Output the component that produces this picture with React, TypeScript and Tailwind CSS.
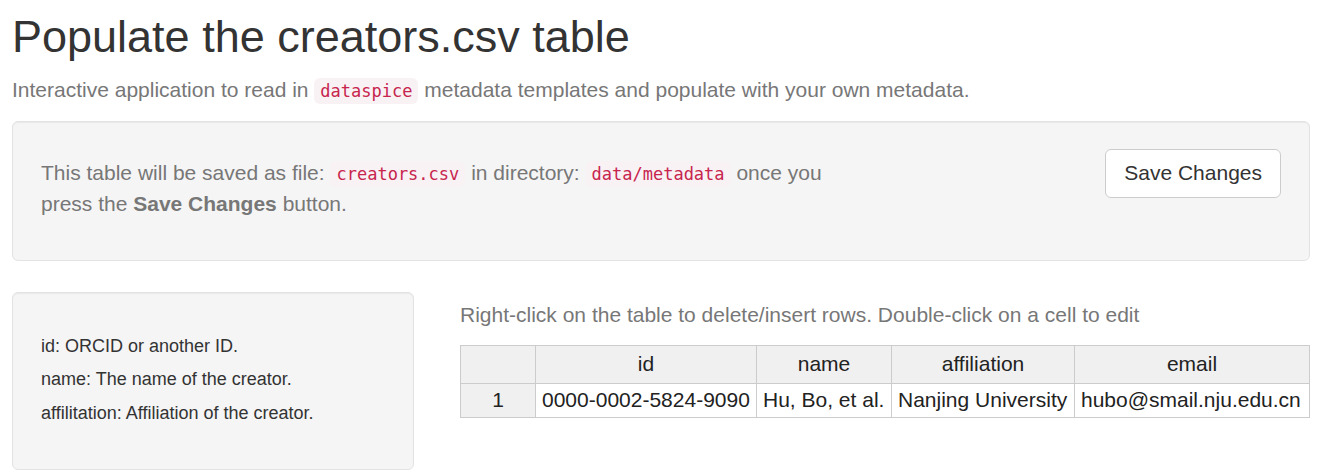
import React from 'react';

const Code: React.FC<{ children: React.ReactNode }> = ({ children }) => (
  <code className="rounded-[6px] bg-[#f9f2f4] px-[6px] py-[3px] font-['DejaVu_Sans_Mono',monospace] text-[17px] text-[#c7254e]">
    {children}
  </code>
);

const columns = [
  { key: 'id', label: 'id', width: 'w-[221px]' },
  { key: 'name', label: 'name', width: 'w-[135px]' },
  { key: 'affiliation', label: 'affiliation', width: 'w-[183px]' },
  { key: 'email', label: 'email', width: 'w-[235px]' },
];

const rows = [
  {
    id: '0000-0002-5824-9090',
    name: 'Hu, Bo, et al.',
    affiliation: 'Nanjing University',
    email: 'hubo@smail.nju.edu.cn',
  },
];

const App: React.FC = () => {
  return (
    <div className="min-h-[474px] bg-white pl-[12px] pr-[8px] pt-[12px] font-['Liberation_Sans',Arial,sans-serif] text-[21px] leading-[30px] text-[#333]">
      <h2 className="text-[45px] font-normal leading-[1.1] text-[#333]">Populate the creators.csv table</h2>
      <p className="mt-[13px] text-[#777]">
        Interactive application to read in <Code>dataspice</Code> metadata templates and populate with your own metadata.
      </p>

      <div className="mt-[15px] rounded-[6px] border border-[#e3e3e3] bg-[#f5f5f5] px-[28px] pt-[27px] pb-[41px] shadow-[inset_0_1px_1px_rgba(0,0,0,0.05)]">
        <div className="flex items-start justify-between">
          <p className="mt-[9px] w-[812px] text-[#777]">
            This table will be saved as file: <Code>creators.csv</Code> in directory: <Code>data/metadata</Code> once you
            press the <b className="font-bold">Save Changes</b> button.
          </p>
          <button className="h-[49px] rounded-[6px] border border-[#ccc] bg-white px-[18px] text-[21px] text-[#333]">
            Save Changes
          </button>
        </div>
      </div>

      <div className="mt-[31px] flex items-start gap-[46px]">
        <div className="w-[402px] shrink-0 rounded-[6px] border border-[#e3e3e3] bg-[#f5f5f5] px-[28px] pt-[37px] pb-[39px] text-[18px] leading-[33.5px] text-[#333] shadow-[inset_0_1px_1px_rgba(0,0,0,0.05)]">
          <div>id: ORCID or another ID.</div>
          <div>name: The name of the creator.</div>
          <div>affilitation: Affiliation of the creator.</div>
        </div>

        <div className="pt-[8px]">
          <p className="text-[#777]">Right-click on the table to delete/insert rows. Double-click on a cell to edit</p>
          <table className="mt-[15px] border-collapse text-[21px] text-[#222]">
            <thead>
              <tr className="h-[38px]">
                <th className="w-[75px] border border-[#ccc] bg-[#f0f0f0] p-0 font-normal"></th>
                {columns.map((c) => (
                  <th key={c.key} className={`${c.width} border border-[#ccc] bg-[#f0f0f0] p-0 text-center font-normal`}>
                    {c.label}
                  </th>
                ))}
              </tr>
            </thead>
            <tbody>
              {rows.map((r, i) => (
                <tr key={i} className="h-[34px]">
                  <td className="border border-[#ccc] bg-[#f0f0f0] p-0 text-center">{i + 1}</td>
                  <td className="border border-[#ccc] bg-white px-[6px] py-0">{r.id}</td>
                  <td className="border border-[#ccc] bg-white px-[6px] py-0">{r.name}</td>
                  <td className="border border-[#ccc] bg-white px-[6px] py-0">{r.affiliation}</td>
                  <td className="border border-[#ccc] bg-white px-[6px] py-0">{r.email}</td>
                </tr>
              ))}
            </tbody>
          </table>
        </div>
      </div>
    </div>
  );
};

export default App;
